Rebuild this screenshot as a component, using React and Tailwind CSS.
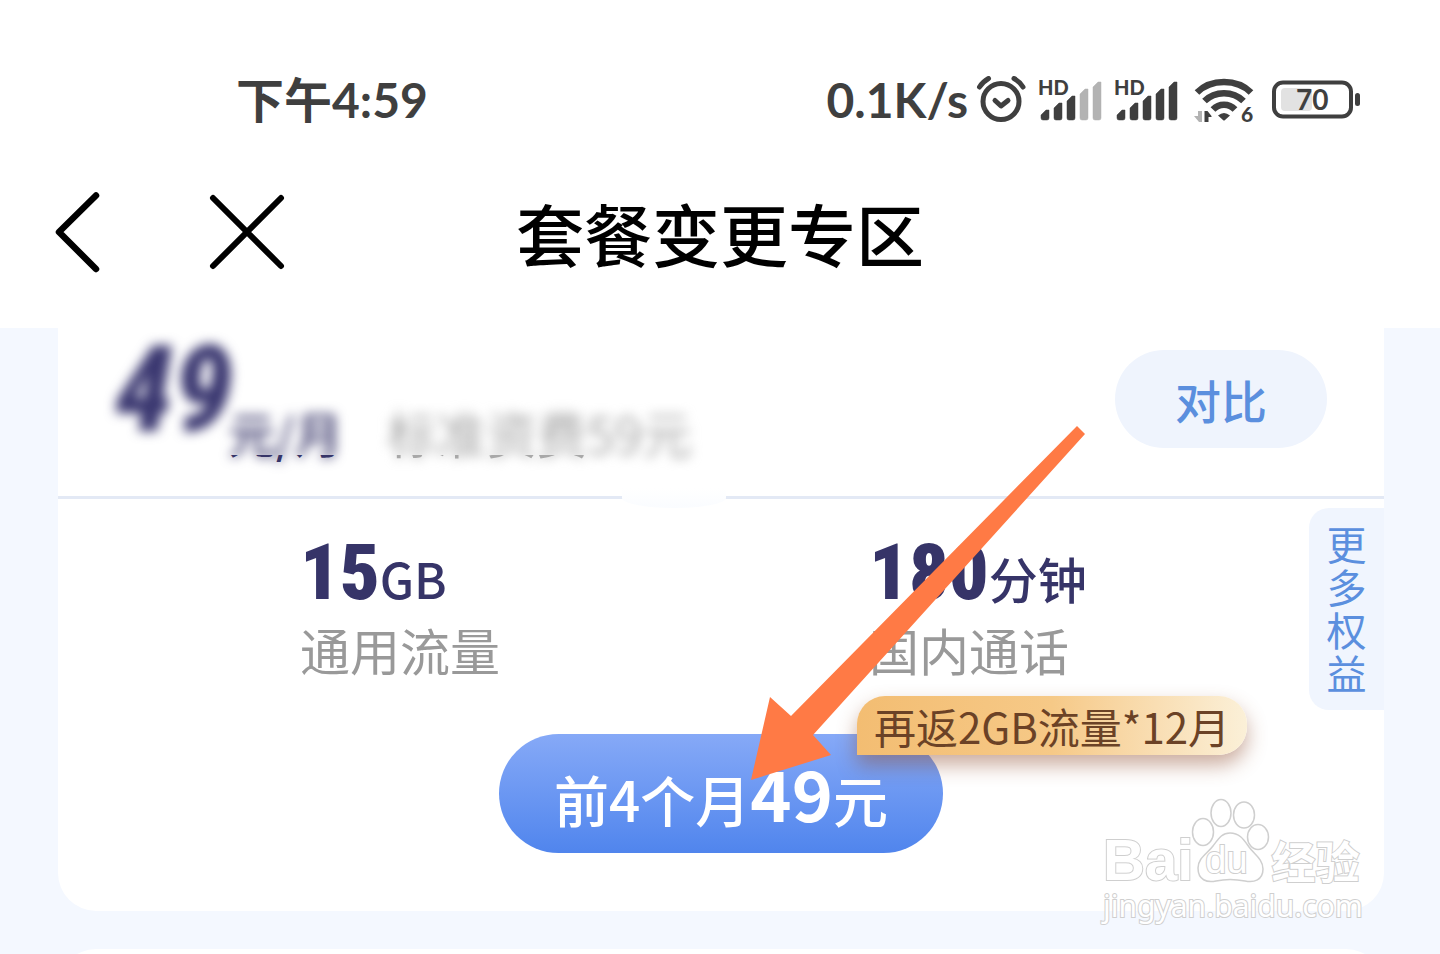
const sans = "font-['Noto_Sans_CJK_SC',sans-serif]";
const latin = "font-[Lato,'Noto_Sans_CJK_SC',sans-serif]";
const narrow = "font-['Roboto_Condensed','Noto_Sans_CJK_SC',sans-serif]";

function AlarmIcon() {
  return (
    <svg className="h-12 w-[50px]" viewBox="0 0 50 48" fill="none" stroke="#3f3f3f" strokeWidth="5" aria-hidden="true">
      <circle cx="25" cy="25.500" r="18" />
      <path d="M19 24.500l6 5.500 7-5.500" strokeLinecap="round" strokeLinejoin="round" />
      <path d="M3.500 11C6 7 9 4.500 12.500 2.500M38 2.500c3.500 2 6.500 4.500 9 8.500" strokeLinecap="round" />
    </svg>
  );
}

function SignalIcon({ strong }) {
  const bars = [32, 25, 18, 11, 4];
  return (
    <svg className="h-11 w-16 overflow-visible" viewBox="0 0 64 44" aria-hidden="true">
      <text x="0" y="17" fontSize="20" fontWeight="900" fill="#3f3f3f" fontFamily="Lato, sans-serif">
        HD
      </text>
      {bars.map((top, i) => (
        <path
          key={top}
          transform={`translate(${3 + i * 13} 0)`}
          d={`M0 ${top + 5} L5 ${top} H8 V40 Q8 42 6 42 H2 Q0 42 0 40Z`}
          fill={strong || i < 3 ? "#3f3f3f" : "#b3b3b3"}
          stroke={strong || i < 3 ? "#3f3f3f" : "#b3b3b3"}
          strokeWidth="0.5"
        />
      ))}
    </svg>
  );
}

function WifiIcon() {
  return (
    <svg className="h-12 w-[60px] overflow-visible" viewBox="0 0 60 48" aria-hidden="true">
      <g fill="none" stroke="#3f3f3f" strokeWidth="6.500">
        <path d="M3 16.500C17 2.500 43 2.500 57 16.500" />
        <path d="M10.500 25C21 14.500 39 14.500 49.500 25" />
        <path d="M19 33.500C25 27 35 27 41 33.500" />
      </g>
      <path d="M24 39.500Q30 34.500 36 39.500L31 44Q30 45 29 44Z" fill="#3f3f3f" />
      <path d="M8 35v11h-3l-5-6h4v-5z" fill="#b3b3b3" />
      <path d="M10.500 46V35h3l4 5v1h-3v5z" fill="#3f3f3f" />
      <text x="47" y="46" fontSize="21" fontWeight="900" fill="#3f3f3f" fontFamily="Lato, sans-serif">
        6
      </text>
    </svg>
  );
}

function BatteryIcon() {
  return (
    <svg className="h-10 w-[88px] overflow-visible" viewBox="0 0 88 40" aria-hidden="true">
      <rect x="2" y="2.500" width="77" height="34" rx="9" fill="none" stroke="#3f3f3f" strokeWidth="4" />
      <rect x="9" y="8" width="31" height="23" rx="4" fill="#e2e2e2" />
      <rect x="83" y="13" width="5" height="13" rx="2.500" fill="#3f3f3f" />
      <text x="24" y="30" fontSize="28" fontWeight="700" fill="#3f3f3f" fontFamily="Lato, sans-serif">
        70
      </text>
    </svg>
  );
}

function Header() {
  return (
    <header className="bg-white">
      <div className={`${latin} flex h-[166px] items-center justify-between pt-[34px] pr-20 pl-[236px] text-[48px] leading-none font-bold text-[#3f3f3f]`}>
        <time>下午4:59</time>
        <div className="flex items-center">
          <span>0.1K/s</span>
          <span className="ml-2 flex items-center gap-3">
            <AlarmIcon />
            <SignalIcon />
            <SignalIcon strong />
          </span>
          <span className="ml-4 flex items-center gap-[18px]">
            <WifiIcon />
            <BatteryIcon />
          </span>
        </div>
      </div>
      <nav className="grid h-[162px] grid-cols-[1fr_auto_1fr] items-center pb-7">
        <div className="flex items-center gap-[105px] pl-[54px]">
          <button type="button" aria-label="返回">
            <svg className="h-[84px] w-12" viewBox="0 0 48 84" fill="none" stroke="#000" strokeWidth="6.500" strokeLinecap="round" strokeLinejoin="round">
              <path d="M42 4.500L5 41l37 37" />
            </svg>
          </button>
          <button type="button" aria-label="关闭">
            <svg className="h-20 w-20" viewBox="0 0 80 80" fill="none" stroke="#000" strokeWidth="6" strokeLinecap="round">
              <path d="M6 5l68 68M74 5L6 73" />
            </svg>
          </button>
        </div>
        <h1 className="text-[68px] leading-none font-medium text-black">套餐变更专区</h1>
        <span />
      </nav>
    </header>
  );
}

function Price() {
  return (
    <div className="flex items-start whitespace-nowrap">
      <span className={`${narrow} w-[114px] text-[120px] leading-[124px] font-black text-[#3a3770] italic`}>49</span>
      <span className="mt-[78px] text-[48px] leading-[52px] font-medium text-[#363468]">元/月</span>
      <span className="mt-[78px] ml-11 text-[50px] leading-[52px] text-[#a8a8a8]">标准资费59元</span>
    </div>
  );
}

function Stat({ value, unit, label }) {
  return (
    <div>
      <dd className="flex items-baseline text-[#363468]">
        <span className={`${narrow} text-[78px] leading-[84px] font-black`}>{value}</span>
        <span className="text-[49px] leading-none font-medium">{unit}</span>
      </dd>
      <dt className="mt-1 text-[50px] leading-[60px] text-[#999]">{label}</dt>
    </div>
  );
}

function Watermark() {
  const outline = "text-white [paint-order:stroke_fill] [-webkit-text-stroke:2px_#cfcfcf]";
  return (
    <div className="absolute right-[75px] bottom-8 w-[262px]" aria-label="Baidu 经验">
      <div className="relative flex h-24 items-end">
        <svg className="absolute top-1 left-[88px] h-[88px] w-20" viewBox="0 0 80 88" fill="#fff" stroke="#cfcfcf" strokeWidth="1.500">
          <ellipse cx="12" cy="34" rx="10.500" ry="13.500" />
          <ellipse cx="30" cy="15" rx="10" ry="13.500" />
          <ellipse cx="53" cy="17" rx="10.500" ry="13" />
          <ellipse cx="67" cy="39" rx="10.500" ry="12.500" />
          <path d="M39 35c10 0 14 7 19 14s14 12 14 22c0 11-9 14-18 12-10-2-20-2-29 0S7 82 7 70c0-10 9-14 15-22s9-13 17-13z" />
        </svg>
        <span className={`${outline} font-['Liberation_Sans'] text-[58px] leading-[60px] font-bold`}>Bai</span>
        <span className={`${outline} relative ml-3 font-['Liberation_Sans'] text-[38px] leading-[60px]`}>du</span>
        <span className={`${outline} ml-6 text-[44px] leading-[60px] font-bold`}>经验</span>
      </div>
      <div className={`${outline} font-['Noto_Sans'] text-[30px] leading-8`}>jingyan.baidu.com</div>
    </div>
  );
}

export default function App() {
  return (
    <div className={`${sans} relative flex min-h-screen flex-col overflow-hidden bg-[#f4f8ff]`}>
      <Header />
      <main className="mr-14 ml-[58px] flex flex-1 flex-col">
        <section className="relative rounded-b-[38px] bg-white pb-[58px]">
          <div className="relative flex h-[171px] items-start justify-between border-b-[3px] border-[#e3e9f5] pr-[57px] pl-14">
            <div className="relative">
              <div className="blur-[6px]">
                <Price />
              </div>
              <div className="absolute inset-0 [clip-path:inset(127px_90px_-20px_0)]" aria-hidden="true">
                <Price />
              </div>
            </div>
            <button type="button" className="mt-[22px] h-[98px] w-[212px] rounded-full bg-[#eff4fd] text-[46px] leading-none font-medium text-[#5b8fde]">
              对比
            </button>
            <span className="absolute -bottom-3 left-[564px] h-5 w-[104px] rounded-b-[50%] bg-linear-to-b from-white to-[#fafcff]" />
          </div>
          <dl className="grid grid-cols-[21fr_19fr] pt-8 pl-[242px]">
            <Stat value="15" unit="GB" label="通用流量" />
            <Stat value="180" unit="分钟" label="国内通话" />
          </dl>
          <button
            type="button"
            className="absolute top-[180px] right-0 w-[75px] rounded-l-[20px] bg-[#f0f5fe] pt-[14px] pb-4 text-[40px] leading-[43px] text-[#5b8fde]"
          >
            <span className="mx-auto block w-10">更多权益</span>
          </button>
          <div className="mt-[55px] flex justify-center">
            <div className="relative">
              <button
                type="button"
                className="flex h-[119px] w-[444px] items-baseline justify-center rounded-full bg-linear-to-b from-[#86a9f7] to-[#5085ed] pt-4 text-[55px] leading-[84px] font-medium text-white"
              >
                前4个月<b className="text-[70px] leading-[84px]">49</b>元
              </button>
              <span className="absolute -top-[38px] left-[358px] rounded-[28px] rounded-bl-none bg-linear-to-r from-[#f3bd72] via-[#f6c987] to-[#fbf0d8] px-[17px] text-[42px] leading-[59px] whitespace-nowrap text-[#6b4226] shadow-[0_10px_20px_rgba(140,70,40,0.45)]">
                再返2GB流量*12月
              </span>
            </div>
          </div>
        </section>
        <div className="relative mt-[38px] flex-1 overflow-hidden">
          <section className="absolute inset-x-0 top-0 h-20 rounded-t-[38px] bg-white" />
        </div>
      </main>
      <Watermark />
      <svg className="absolute top-[426px] left-[751px] h-[354px] w-[334px]" viewBox="0 0 334 354" fill="#ff7a45" aria-hidden="true">
        <path d="M326 0L334 8 62 309 80 329 0 354 19 271 40 290Z" />
      </svg>
    </div>
  );
}
